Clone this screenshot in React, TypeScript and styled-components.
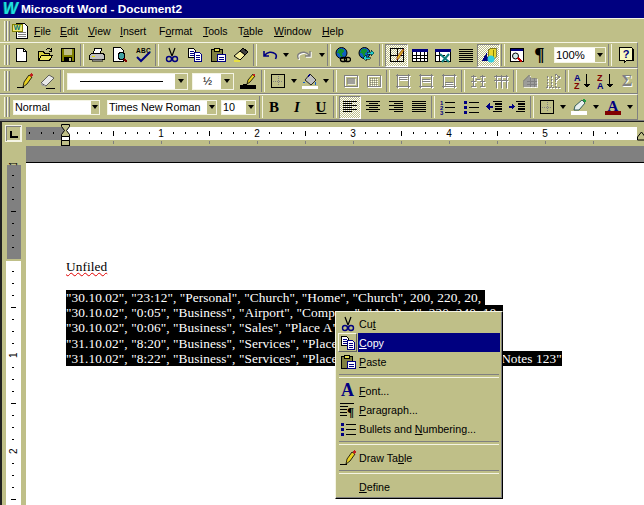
import React from "react";
import styled, { createGlobalStyle } from "styled-components";

const KHAKI = "#bfbf88";
const GRAY = "#808080";
const NAVY = "#000080";

const GlobalStyle = createGlobalStyle`
  html, body { margin: 0; padding: 0; background: ${KHAKI}; }
  * { box-sizing: border-box; }
`;

const Glyph = styled.svg.attrs({ viewBox: "0 0 16 16", shapeRendering: "crispEdges" })`
  width: 16px;
  height: 16px;
  display: block;
  flex: none;
`;

const Disabled: React.FC<{ children: React.ReactNode }> = ({ children }) => (
  <Glyph fill="none">
    <g transform="translate(1 1)" stroke="#fff" color="#fff">{children}</g>
    <g stroke={GRAY} color={GRAY}>{children}</g>
  </Glyph>
);

const NewIcon = () => (
  <Glyph><path d="M2.5 1.5h7l3 3v10h-10z" fill="#fff" stroke="#000" /><path d="M9.5 1.5v3h3" fill="none" stroke="#000" /></Glyph>
);
const OpenIcon = () => (
  <Glyph>
    <path d="M1.5 4.5h5l1 2h5v7h-11z" fill="#d8d040" stroke="#000" />
    <path d="M1.5 13.5l3-5h11l-3 5z" fill="#f0e860" stroke="#000" />
    <path d="M9 3c1-2 3-2 5 0M14.5 1v3h-3" fill="none" stroke="#000" />
  </Glyph>
);
const SaveIcon = () => (
  <Glyph>
    <rect x="1.5" y="1.5" width="13" height="13" fill="#808000" stroke="#000" />
    <rect x="4" y="2" width="8" height="6" fill={KHAKI} />
    <rect x="4" y="10" width="8" height="4" fill="#000" />
    <rect x="9" y="11" width="2" height="3" fill={KHAKI} />
  </Glyph>
);
const PrintIcon = () => (
  <Glyph>
    <path d="M5.5 1.5h7l-1 5h-7z" fill="#fff" stroke="#000" />
    <path d="M2.5 6.5h12l1 2v4h-15v-4z" fill="#c0c0c0" stroke="#000" />
    <rect x="3" y="9" width="3" height="1" fill="#e8e000" />
    <rect x="3" y="12" width="10" height="2" fill={GRAY} stroke="#000" strokeWidth=".5" />
  </Glyph>
);
const PreviewIcon = () => (
  <Glyph>
    <path d="M1.5 .5h7l3 3v11h-10z" fill="#fff" stroke="#000" />
    <circle cx="9.5" cy="9" r="3.5" fill="#40a0a0" stroke="#000" />
    <path d="M12 12l3 3" stroke="#800000" strokeWidth="2" />
  </Glyph>
);
const SpellIcon = () => (
  <Glyph>
    <text x="1" y="6" fontFamily="Liberation Sans, sans-serif" fontSize="6.5" fontWeight="700" fill="#000" style={{ letterSpacing: ".3px" }}>ABC</text>
    <path d="M2 10l4 4 9-9" fill="none" stroke={NAVY} strokeWidth="2" shapeRendering="auto" />
  </Glyph>
);
const CutIcon = () => (
  <Glyph>
    <path d="M5 1l3 8M11 1l-3 8" stroke="#000" fill="none" strokeWidth="1.2" shapeRendering="auto" />
    <circle cx="5" cy="12" r="2.5" fill="none" stroke={NAVY} strokeWidth="1.4" shapeRendering="auto" />
    <circle cx="11" cy="12" r="2.5" fill="none" stroke={NAVY} strokeWidth="1.4" shapeRendering="auto" />
  </Glyph>
);
const CopyIcon = () => (
  <Glyph>
    <path d="M1.5 1.5h5l2 2v7h-7z" fill="#fff" stroke="#000" />
    <path d="M3 4h4M3 6h4M3 8h4" stroke={NAVY} />
    <path d="M7.5 5.5h5l2 2v7h-7z" fill="#fff" stroke={NAVY} />
    <path d="M9 8h4M9 10h4M9 12h4" stroke={NAVY} />
  </Glyph>
);
const PasteIcon = () => (
  <Glyph>
    <rect x="1.5" y="2.5" width="11" height="12" fill="#808040" stroke="#000" />
    <rect x="4.5" y="1.5" width="5" height="3" fill="#e0d850" stroke="#000" />
    <path d="M7.5 7.5h8v7h-8z" fill="#fff" stroke={NAVY} />
    <path d="M9 10h5M9 12h5" stroke={NAVY} />
  </Glyph>
);
const PainterIcon = () => (
  <Glyph>
    <path d="M10 1l5 4-3 3-5-4z" fill="#404040" stroke="#000" />
    <path d="M7 4l5 4-5 5-6-4z" fill="#f8f0a0" stroke="#000" shapeRendering="auto" />
    <path d="M1 13h6v2H1z" fill="#e8e040" />
  </Glyph>
);
const UndoIcon = ({ color }: { color: string }) => (
  <Glyph>
    <path d="M2 4v5h5M2.5 8.5C5 5 10 4 13.5 7c1 1 1 3 0 5" fill="none" stroke={color} strokeWidth="1.6" shapeRendering="auto" />
  </Glyph>
);
const RedoIcon = () => (
  <Glyph>
    <g transform="translate(1 1)"><path d="M14 4v5H9M13.5 8.5C11 5 6 4 2.500 7c-1 1-1 3 0 5" fill="none" stroke="#fff" strokeWidth="1.4" shapeRendering="auto" /></g>
    <path d="M14 4v5H9M13.5 8.500C11 5 6 4 2.500 7c-1 1-1 3 0 5" fill="none" stroke={GRAY} strokeWidth="1.4" shapeRendering="auto" />
  </Glyph>
);
const Globe = () => (
  <>
    <circle cx="6.500" cy="6" r="5.500" fill="#1060c0" stroke="#000" shapeRendering="auto" />
    <path d="M4 2h4l1 2-2 2 1 3-2 1-1-3-3-1z" fill="#109030" />
  </>
);
const LinkIcon = () => (
  <Glyph>
    <Globe />
    <rect x="5.500" y="10.500" width="6" height="4" rx="2" fill="none" stroke="#000" strokeWidth="1.300" shapeRendering="auto" />
    <rect x="9.500" y="10.500" width="6" height="4" rx="2" fill="none" stroke="#000" strokeWidth="1.300" shapeRendering="auto" />
  </Glyph>
);
const WebIcon = () => (
  <Glyph>
    <Globe />
    <path d="M9 5h4V3l3 3-3 3V7H9z" fill="#20d0d0" stroke="#000" strokeWidth=".5" />
    <path d="M12 10H8V8l-3 3 3 3v-2h4z" fill="#20d0d0" stroke="#000" strokeWidth=".5" />
  </Glyph>
);
const TablesIcon = () => (
  <Glyph>
    <rect x="1.500" y="1.500" width="13" height="13" fill="none" stroke="#000" />
    <path d="M1.500 8.500h13M8.500 1.500v13" stroke="#000" />
    <path d="M14 2l1 1-5 8-2 2 0-3z" fill="#e8d020" stroke="#800000" strokeWidth=".6" shapeRendering="auto" />
  </Glyph>
);
const InsertTableIcon = () => (
  <Glyph>
    <rect x="0" y="2" width="16" height="13" fill="#fff" stroke="none" />
    <rect x="0" y="2" width="16" height="3" fill={NAVY} />
    <path d="M.5 5v9.500h15V5M.5 8.500h15M.5 11.500h15M4.500 5v10M8.500 5v10M12.500 5v10" fill="none" stroke="#000" />
  </Glyph>
);
const ExcelIcon = () => (
  <Glyph>
    <rect x="0" y="2" width="16" height="13" fill="#fff" />
    <rect x="0" y="2" width="16" height="3" fill={NAVY} />
    <path d="M.5 5v9.500h15V5M.5 8.500h9M4.500 5v9" fill="none" stroke="#000" />
    <path d="M5 7l9 8M14 7l-7 8" stroke="#108080" strokeWidth="2" shapeRendering="auto" />
  </Glyph>
);
const ColumnsIcon = () => (
  <Glyph>
    <path d="M1 2.500h14M1 4.500h14M1 6.500h14M1 8.500h14M1 10.500h14M1 12.500h14M1 14.500h14" stroke="#000" />
  </Glyph>
);
const DrawingIcon = () => (
  <Glyph>
    <path d="M6 5L1 14h6z" fill={NAVY} />
    <path d="M7 3l3-2h5v9l-3 2H7z" fill="#e8d830" stroke="#404000" strokeWidth=".6" />
    <path d="M12 3v9" stroke="#808000" />
    <circle cx="10" cy="12" r="3.500" fill="#30d0e0" shapeRendering="auto" />
  </Glyph>
);
const DocMapIcon = () => (
  <Glyph>
    <rect x="1.500" y="1.500" width="13" height="13" fill="#fff" stroke="#000" />
    <rect x="2" y="2" width="12" height="2" fill={NAVY} />
    <circle cx="6.500" cy="9" r="3" fill="#d0e8e8" stroke="#000" shapeRendering="auto" />
    <path d="M9 11l4 4" stroke="#c00000" strokeWidth="2" />
  </Glyph>
);
const HelpIcon = () => (
  <Glyph viewBox="0 0 16 16">
    <path d="M1.500 .5h12l1 1v12h-6l-2 2v-2h-5z" fill="#f8f8c0" stroke="#000" />
    <path d="M15.500 2v12" stroke="#000" />
    <text x="8" y="11" textAnchor="middle" fontFamily="Liberation Sans, sans-serif" fontSize="11" fontWeight="700" fill={NAVY}>?</text>
  </Glyph>
);
const PencilIcon = () => (
  <Glyph>
    <path d="M0 14.500h7" stroke="#000" />
    <path d="M6 14l1-5 5-7 3 2-5 7z" fill="#e8d020" stroke="#000" strokeWidth=".8" shapeRendering="auto" />
    <path d="M12 2l3 2 1-2-2-2z" fill="#c02020" />
  </Glyph>
);
const EraserIcon = () => (
  <Glyph>
    <path d="M1 10l8-8 5 3-8 8z" fill="#e8e8e8" stroke="#404040" strokeWidth=".8" shapeRendering="auto" />
    <path d="M1 10l5 3v1L1 12z" fill="#a0a0a0" />
    <path d="M6 15.500h9" stroke="#000" />
  </Glyph>
);
const PenColorIcon = () => (
  <Glyph>
    <path d="M3 11.500h4" stroke="#000" />
    <path d="M7 11l1-4 5-6 2 2-5 6z" fill="#e8d020" stroke="#000" strokeWidth=".8" shapeRendering="auto" />
    <path d="M12 2l2 2 1-2-1-2z" fill="#c02020" />
    <rect x="0" y="12" width="16" height="4" fill="#000" />
  </Glyph>
);
const BorderIcon = () => (
  <Glyph>
    <rect x="1.500" y="1.500" width="13" height="13" fill="none" stroke="#000" />
    <path d="M8 3v10M3 8h10" stroke={GRAY} strokeDasharray="1 1" />
  </Glyph>
);
const ShadeIcon = () => (
  <Glyph>
    <path d="M8 1l6 6-5 5-6-5z" fill="#c0c0c0" stroke="#000" strokeWidth=".8" shapeRendering="auto" />
    <path d="M8 1L6 4" stroke={NAVY} />
    <path d="M2 7c-1 2-1 3 0 4 1-1 1-2 0-4z" fill="#1060d0" />
    <path d="M13 8c1 2 2 3 1 4-1 0-2-2-1-4z" fill="#1060d0" />
    <rect x="0" y="13" width="16" height="3" fill="#fff" />
  </Glyph>
);
const MergeIcon = () => (
  <Disabled>
    <rect x="1.500" y="2.500" width="13" height="11" />
    <rect x="4" y="5" width="8" height="6" fill="currentColor" stroke="none" opacity=".7" />
  </Disabled>
);
const SplitIcon = () => (
  <Disabled>
    <rect x="1.500" y="2.500" width="13" height="11" />
    <path d="M4 5.500h8M4 7.500h8M4 9.500h8M4 11.500h8" strokeDasharray="1 1" />
  </Disabled>
);
const VAlignIcon = ({ y }: { y: number }) => (
  <Disabled>
    <path d="M1 2.500h14M1 13.500h14M2.500 1v14M13.500 1v14" />
    <path d={`M4 ${y}.5h8M4 ${y + 2}.5h8`} />
  </Disabled>
);
const RowsIcon = () => (
  <Disabled>
    <path d="M3.500 2v12M12.500 2v12M1 3.500h5M1 8.500h5M1 13.500h5M10 3.500h5M10 8.500h5M10 13.500h5M6 6.500h4" />
  </Disabled>
);
const ColsIcon = () => (
  <Disabled>
    <path d="M1 3.500h14M1 7.500h14M3.500 2v13M8.500 2v13M13.500 2v13" />
  </Disabled>
);
const AutoFormatIcon = () => (
  <Disabled>
    <path d="M7 1L1 7v7h14V5H9z" fill="currentColor" stroke="none" opacity=".75" />
    <path d="M5 8h10M5 11h10M8 5v9M12 5v9" />
  </Disabled>
);
const OrientIcon = () => (
  <Disabled>
    <path d="M2.500 3v11M6.500 3v11M10.500 1v13M1 14.500h14" strokeDasharray="2 1" />
    <path d="M10 1l5 3-5 3" />
  </Disabled>
);
const SortIcon = ({ top, bottom, topColor, bottomColor }: { top: string; bottom: string; topColor: string; bottomColor: string }) => (
  <Glyph>
    <text x="0" y="7.500" fontFamily="Liberation Sans, sans-serif" fontSize="9" fontWeight="700" fill={topColor}>{top}</text>
    <text x="0" y="15.500" fontFamily="Liberation Sans, sans-serif" fontSize="9" fontWeight="700" fill={bottomColor}>{bottom}</text>
    <path d="M12.500 1v12" stroke="#000" />
    <path d="M9.500 11h7l-3.500 4z" fill="#000" />
  </Glyph>
);
const SumIcon = () => (
  <Glyph>
    <text x="9" y="14" textAnchor="middle" fontFamily="Liberation Serif, serif" fontSize="16" fontWeight="700" fill="#fff">Σ</text>
    <text x="8" y="13" textAnchor="middle" fontFamily="Liberation Serif, serif" fontSize="16" fontWeight="700" fill={GRAY}>Σ</text>
  </Glyph>
);
const AlignIcon = ({ kind }: { kind: "left" | "center" | "right" | "justify" }) => {
  const lengths = kind === "justify" ? [14, 14, 14, 14, 14, 14] : [14, 9, 14, 9, 14, 9];
  return (
    <Glyph>
      {lengths.map((len, i) => {
        const x = kind === "center" ? 1 + (14 - len) / 2 : kind === "right" ? 15 - len : 1;
        return <rect key={i} x={x} y={2 + i * 2} width={len} height="1" fill="#000" />;
      })}
    </Glyph>
  );
};
const NumberingIcon = () => (
  <Glyph>
    <text x="0" y="5.500" fontFamily="Liberation Sans, sans-serif" fontSize="6" fontWeight="700" fill={NAVY}>1</text>
    <text x="0" y="10.500" fontFamily="Liberation Sans, sans-serif" fontSize="6" fontWeight="700" fill={NAVY}>2</text>
    <text x="0" y="15.500" fontFamily="Liberation Sans, sans-serif" fontSize="6" fontWeight="700" fill={NAVY}>3</text>
    <path d="M5 3.500h10M5 8.500h10M5 13.500h10" stroke="#000" />
  </Glyph>
);
const BulletsIcon = () => (
  <Glyph>
    <rect x="1" y="2" width="3" height="3" fill={NAVY} />
    <rect x="1" y="7" width="3" height="3" fill={NAVY} />
    <rect x="1" y="12" width="3" height="3" fill={NAVY} />
    <path d="M6 3.500h10M6 8.500h10M6 13.500h10" stroke="#000" />
  </Glyph>
);
const IndentIcon = ({ inward }: { inward: boolean }) => (
  <Glyph>
    <path d="M7 2.500h9M9 5h7M9 7.500h7M9 10h7M7 12.500h9" stroke="#000" strokeWidth="1.200" />
    {inward ? <path d="M0 6.500h3V4l3 3.500L3 11V8.500H0z" fill={NAVY} /> : <path d="M7 6.500H4V4L0 7.500 4 11V8.500h3z" fill={NAVY} />}
  </Glyph>
);
const HighlightIcon = () => (
  <Glyph>
    <path d="M3 11l1-4 7-6 3 3-6 7z" fill="#e8f0f0" stroke="#104040" strokeWidth=".8" shapeRendering="auto" />
    <path d="M11 1l3 3 1-2-2-2z" fill="#20a040" />
    <rect x="0" y="12" width="16" height="4" fill="#fff" />
  </Glyph>
);
const FontColorIcon = () => (
  <Glyph>
    <text x="8" y="12" textAnchor="middle" fontFamily="Liberation Serif, serif" fontSize="15" fontWeight="700" fill={NAVY}>A</text>
    <rect x="0" y="12" width="16" height="4" fill="#800000" />
  </Glyph>
);
const ParagraphIcon = () => (
  <Glyph>
    <path d="M0 1.500h14M0 4.500h8M0 7.500h7M0 10.500h7M0 13.500h7" stroke="#000" />
    <text x="7" y="14" fontFamily="Liberation Serif, serif" fontSize="13" fontWeight="700" fill="#000">¶</text>
  </Glyph>
);
const DocIcon = () => (
  <Glyph>
    <path d="M4.500 .5h8l3 3v12h-11z" fill="#fff" stroke="#000" />
    <path d="M6 9h8M6 11h8M6 13h8" stroke={GRAY} />
    <rect x="0" y="1" width="10" height="7" fill="#f0e870" stroke="#808000" />
    <text x="5" y="7" textAnchor="middle" fontFamily="Liberation Sans, sans-serif" fontSize="7" fontWeight="700" fill="#007070">W</text>
  </Glyph>
);

const Screen = styled.div`
  position: relative;
  width: 644px;
  height: 505px;
  overflow: hidden;
  background: ${KHAKI};
  display: flex;
  flex-direction: column;
  font-family: "Liberation Sans", Arial, sans-serif;
  color: #000;
`;

const TitleBar = styled.div`
  height: 18px;
  background: ${NAVY};
  display: flex;
  align-items: center;
  padding-left: 3px;
  gap: 3px;
  color: #fff;
  font-weight: 700;
  font-size: 11.8px;
  flex: none;
`;

const TitleLogo = styled.span`
  width: 15px;
  font-family: "Liberation Sans", sans-serif;
  font-style: italic;
  font-weight: 700;
  font-size: 16px;
  line-height: 18px;
  color: #20e0e0;
  text-shadow: -1px 0 #007060;
`;

const MenuBar = styled.div`
  height: 24px;
  flex: none;
  display: flex;
  align-items: center;
  padding-left: 4px;
  border-top: 1px solid #f4f4e4;
  font-size: 10.5px;
`;

const Handle = styled.div<{ $gap?: number }>`
  width: 6px;
  height: 20px;
  flex: none;
  margin-right: ${(p) => p.$gap ?? 0}px;
  background: linear-gradient(
    90deg,
    #f4f4e4 0 1px,
    ${KHAKI} 1px 2px,
    ${GRAY} 2px 3px,
    #f4f4e4 3px 4px,
    ${KHAKI} 4px 5px,
    ${GRAY} 5px 6px
  );
`;

const MenuLogo = styled.div`
  margin: 0 3px 0 2px;
  width: 15px;
  display: flex;
`;

const MenuTitle = styled.div<{ $w: number }>`
  width: ${(p) => p.$w}px;
  padding-left: 4px;
  flex: none;
`;

const Toolbar = styled.div`
  height: 26px;
  width: 638px;
  flex: none;
  display: flex;
  align-items: center;
  padding-left: 4px;
  overflow: hidden;
  border-top: 1px solid #f4f4e4;
  border-bottom: 1px solid ${GRAY};
  border-right: 1px solid ${GRAY};
  font-size: 11px;
`;

const Btn = styled.div<{ $w?: number; $on?: boolean; $ml?: number }>`
  width: ${(p) => p.$w ?? 23}px;
  height: 23px;
  margin-left: ${(p) => p.$ml ?? 0}px;
  flex: none;
  display: flex;
  align-items: center;
  justify-content: center;
  ${(p) =>
    p.$on
      ? `
    background-image: repeating-conic-gradient(#fff 0 25%, ${KHAKI} 0 50%);
    background-size: 2px 2px;
    border-top: 1px solid ${GRAY};
    border-left: 1px solid ${GRAY};
    border-right: 1px solid #fff;
    border-bottom: 1px solid #fff;
  `
      : ""}
`;

const Face = styled.span<{ $style: "bold" | "italic" | "under" | "para" }>`
  font-family: "Liberation Serif", serif;
  font-size: ${(p) => (p.$style === "para" ? 19 : 15)}px;
  font-weight: 700;
  font-style: ${(p) => (p.$style === "italic" ? "italic" : "normal")};
  text-decoration: ${(p) => (p.$style === "under" ? "underline" : "none")};
`;

const Drop = styled.div<{ $w?: number }>`
  width: ${(p) => p.$w ?? 10}px;
  height: 23px;
  flex: none;
  display: flex;
  align-items: center;
  justify-content: center;
`;

const Arrow = styled.div`
  width: 0;
  height: 0;
  border-left: 3.5px solid transparent;
  border-right: 3.5px solid transparent;
  border-top: 4px solid #000;
`;

const Sep = styled.div<{ $w?: number }>`
  width: ${(p) => p.$w ?? 6}px;
  height: 22px;
  flex: none;
  display: flex;
  justify-content: center;
  &::before {
    content: "";
    width: 2px;
    height: 100%;
    border-left: 1px solid ${GRAY};
    border-right: 1px solid #f4f4e4;
  }
`;

const Select = styled.div<{ $w: number; $h?: number; $ml?: number }>`
  width: ${(p) => p.$w}px;
  height: ${(p) => p.$h ?? 15}px;
  margin-left: ${(p) => p.$ml ?? 0}px;
  flex: none;
  display: flex;
  align-items: center;
  background: #fff;
  border: 1px solid #f4f4e4;
  white-space: nowrap;
`;

const SelectText = styled.div<{ $center?: boolean; $size?: number }>`
  flex: 1;
  padding-left: 1px;
  font-size: ${(p) => p.$size ?? 10.8}px;
  text-align: ${(p) => (p.$center ? "center" : "left")};
  overflow: hidden;
`;

const SelectBtn = styled.div<{ $w?: number }>`
  width: ${(p) => p.$w ?? 10}px;
  height: 100%;
  flex: none;
  background: ${KHAKI};
  display: flex;
  align-items: center;
  justify-content: center;
`;

const LineSample = styled.div`
  flex: 1;
  height: 1px;
  margin: 0 12px;
  background: #000;
`;

const Workspace = styled.div`
  flex: 1;
  display: flex;
  min-height: 0;
  padding-top: 2px;
  box-shadow: inset 2px 0 0 #202020;
  position: relative;
  &::before {
    content: "";
    position: absolute;
    left: 0;
    right: 0;
    top: 0;
    height: 2px;
    background: linear-gradient(${GRAY} 0 1px, #202020 1px 2px);
  }
`;

const LeftColumn = styled.div`
  width: 26px;
  flex: none;
  padding: 3px 0 0 5px;
  display: flex;
  flex-direction: column;
`;

const TabButton = styled.div`
  width: 17px;
  height: 17px;
  flex: none;
  border: 1px solid #f4f4e4;
  box-shadow: inset 1px 1px 0 ${GRAY}, inset -1px -1px 0 #f4f4e4;
  display: flex;
  align-items: center;
  justify-content: center;
  &::before {
    content: "";
    width: 6px;
    height: 5px;
    margin: 1px 0 0 1px;
    border-left: 2px solid #000;
    border-bottom: 2px solid #000;
  }
`;

const SideRuler = styled.svg`
  width: 15px;
  height: 342px;
  margin: 21px 0 0 1px;
  display: block;
  flex: none;
`;

const RightColumn = styled.div`
  flex: 1;
  display: flex;
  flex-direction: column;
  min-width: 0;
`;

const TopRuler = styled.svg`
  width: 618px;
  height: 24px;
  display: block;
  flex: none;
`;

const MarginBand = styled.div`
  height: 17px;
  flex: none;
  background: ${GRAY};
  border-bottom: 1px solid #000;
`;

const Page = styled.div`
  flex: 1;
  background: #fff;
  padding: 96px 0 0 40px;
  font-family: "Liberation Serif", "Times New Roman", serif;
  font-size: 13.33px;
  line-height: 15.33px;
  letter-spacing: 0.08px;
  white-space: pre;
`;

const Misspelt = styled.div`
  height: 30.66px;
  & > span {
    text-decoration: underline wavy #e00000 1px;
    text-underline-offset: 1px;
  }
`;

const Selected = styled.div`
  width: fit-content;
  background: #000;
  color: #fff;
`;

const ContextMenu = styled.div`
  position: absolute;
  left: 335px;
  top: 311px;
  width: 168px;
  padding: 2px;
  background: ${KHAKI};
  border: 1px solid;
  border-color: #f4f4e4 #000 #000 #f4f4e4;
  box-shadow: inset -1px -1px 0 ${GRAY};
  font-size: 10.7px;
  color: #000;
`;

const MenuRow = styled.div`
  height: 19px;
  display: flex;
  align-items: stretch;
`;

const MenuIconCell = styled.div<{ $raised?: boolean }>`
  width: 19px;
  flex: none;
  display: flex;
  align-items: center;
  justify-content: center;
  ${(p) => (p.$raised ? "border: 1px solid; border-color: #f4f4e4 #606060 #606060 #f4f4e4;" : "")}
`;

const MenuLabel = styled.div<{ $active?: boolean }>`
  flex: 1;
  margin-left: 1px;
  padding-left: 1px;
  display: flex;
  align-items: center;
  white-space: pre;
  background: ${(p) => (p.$active ? NAVY : "transparent")};
  color: ${(p) => (p.$active ? "#fff" : "#000")};
`;

const MenuDivider = styled.div`
  height: 10px;
  display: flex;
  align-items: center;
  padding: 0 1px;
  &::before {
    content: "";
    flex: 1;
    height: 2px;
    border-top: 1px solid ${GRAY};
    border-bottom: 1px solid #f4f4e4;
  }
`;

const FontA = styled.span`
  font-family: "Liberation Serif", serif;
  font-weight: 700;
  font-size: 18px;
  line-height: 17px;
  color: ${NAVY};
`;

const menuTitles: [React.ReactNode, number][] = [
  [<><u>F</u>ile</>, 26],
  [<><u>E</u>dit</>, 28],
  [<><u>V</u>iew</>, 32],
  [<><u>I</u>nsert</>, 39],
  [<>F<u>o</u>rmat</>, 44],
  [<><u>T</u>ools</>, 35],
  [<>T<u>a</u>ble</>, 36],
  [<><u>W</u>indow</>, 48],
  [<><u>H</u>elp</>, 40],
];

const docLines = [
  `"30.10.02", "23:12", "Personal", "Church", "Home", "Church", 200, 220, 20, `,
  `"30.10.02", "0:05", "Business", "Airport", "Company", "Air Port", 220, 240, 10, `,
  `"30.10.02", "0:06", "Business", "Sales", "Place A", "Customer", 10, `,
  `"31.10.02", "8:20", "Business", "Services", "Place B", "Site", 10, `,
  `"31.10.02", "8:22", "Business", "Services", "Place C", "Site Two", 140, 150, 6, "Notes 123"`,
];

const tick = (k: number) => 39 + k * 12;

const App: React.FC = () => {
  const topTicks = Array.from({ length: 50 }, (_, i) => i - 3).filter((k) => tick(k) < 611);
  const sideTicks = Array.from({ length: 29 }, (_, i) => i - 8);
  return (
    <Screen>
      <GlobalStyle />
      <TitleBar>
        <TitleLogo>W</TitleLogo>
        Microsoft Word - Document2
      </TitleBar>
      <MenuBar>
        <Handle />
        <MenuLogo><DocIcon /></MenuLogo>
        {menuTitles.map(([label, w], i) => (
          <MenuTitle key={i} $w={w}>{label}</MenuTitle>
        ))}
      </MenuBar>

      <Toolbar>
        <Handle />
        <Btn><NewIcon /></Btn>
        <Btn><OpenIcon /></Btn>
        <Btn><SaveIcon /></Btn>
        <Sep />
        <Btn><PrintIcon /></Btn>
        <Btn><PreviewIcon /></Btn>
        <Btn><SpellIcon /></Btn>
        <Sep />
        <Btn><CutIcon /></Btn>
        <Btn><CopyIcon /></Btn>
        <Btn><PasteIcon /></Btn>
        <Btn><PainterIcon /></Btn>
        <Sep />
        <Btn><UndoIcon color={NAVY} /></Btn>
        <Drop><Arrow /></Drop>
        <Btn $w={26}><RedoIcon /></Btn>
        <Drop><Arrow /></Drop>
        <Sep $w={4} />
        <Btn><LinkIcon /></Btn>
        <Btn><WebIcon /></Btn>
        <Sep $w={8} />
        <Btn $on><TablesIcon /></Btn>
        <Btn><InsertTableIcon /></Btn>
        <Btn><ExcelIcon /></Btn>
        <Btn><ColumnsIcon /></Btn>
        <Btn $on><DrawingIcon /></Btn>
        <Sep $w={5} />
        <Btn><DocMapIcon /></Btn>
        <Btn><Face $style="para">¶</Face></Btn>
        <Select $w={52} $h={16} $ml={3}>
          <SelectText $size={11.3}>100%</SelectText>
          <SelectBtn><Arrow /></SelectBtn>
        </Select>
        <Sep $w={8} />
        <Btn><HelpIcon /></Btn>
      </Toolbar>

      <Toolbar>
        <Handle $gap={3} />
        <Btn><PencilIcon /></Btn>
        <Btn><EraserIcon /></Btn>
        <Sep />
        <Select $w={121} $h={17} $ml={2}>
          <LineSample />
          <SelectBtn $w={12}><Arrow /></SelectBtn>
        </Select>
        <Select $w={42} $h={17} $ml={4}>
          <SelectText $center>½</SelectText>
          <SelectBtn $w={12}><Arrow /></SelectBtn>
        </Select>
        <Btn $ml={2}><PenColorIcon /></Btn>
        <Sep $w={7} />
        <Btn><BorderIcon /></Btn>
        <Drop $w={9}><Arrow /></Drop>
        <Btn><ShadeIcon /></Btn>
        <Drop><Arrow /></Drop>
        <Sep $w={8} />
        <Btn><MergeIcon /></Btn>
        <Btn><SplitIcon /></Btn>
        <Sep />
        <Btn><VAlignIcon y={4} /></Btn>
        <Btn><VAlignIcon y={6} /></Btn>
        <Btn><VAlignIcon y={9} /></Btn>
        <Sep />
        <Btn><RowsIcon /></Btn>
        <Btn><ColsIcon /></Btn>
        <Sep />
        <Btn><AutoFormatIcon /></Btn>
        <Btn><OrientIcon /></Btn>
        <Sep />
        <Btn><SortIcon top="A" bottom="Z" topColor={NAVY} bottomColor="#800000" /></Btn>
        <Btn><SortIcon top="Z" bottom="A" topColor="#800000" bottomColor={NAVY} /></Btn>
        <Btn $w={22}><SumIcon /></Btn>
      </Toolbar>

      <Toolbar>
        <Handle $gap={3} />
        <Select $w={87}>
          <SelectText>Normal</SelectText>
          <SelectBtn $w={8}><Arrow /></SelectBtn>
        </Select>
        <Select $w={110} $ml={7}>
          <SelectText>Times New Roman</SelectText>
          <SelectBtn $w={9}><Arrow /></SelectBtn>
        </Select>
        <Select $w={35} $ml={4}>
          <SelectText>10</SelectText>
          <SelectBtn $w={9}><Arrow /></SelectBtn>
        </Select>
        <Sep $w={9} />
        <Btn $w={18}><Face $style="bold">B</Face></Btn>
        <Btn $w={28}><Face $style="italic">I</Face></Btn>
        <Btn $w={20}><Face $style="under">U</Face></Btn>
        <Sep $w={8} />
        <Btn $w={22} $on><AlignIcon kind="left" /></Btn>
        <Btn><AlignIcon kind="center" /></Btn>
        <Btn><AlignIcon kind="right" /></Btn>
        <Btn><AlignIcon kind="justify" /></Btn>
        <Sep />
        <Btn><NumberingIcon /></Btn>
        <Btn><BulletsIcon /></Btn>
        <Btn><IndentIcon inward={false} /></Btn>
        <Btn><IndentIcon inward /></Btn>
        <Sep $w={7} />
        <Btn><BorderIcon /></Btn>
        <Drop $w={9}><Arrow /></Drop>
        <Btn><HighlightIcon /></Btn>
        <Drop $w={11}><Arrow /></Drop>
        <Btn $w={24}><FontColorIcon /></Btn>
        <Drop><Arrow /></Drop>
      </Toolbar>

      <Workspace>
        <LeftColumn>
          <TabButton />
          <SideRuler viewBox="0 0 15 342">
            <rect x="1" y="2" width="14" height="94" fill={GRAY} />
            <rect x="0" y="98" width="15" height="244" fill="#fff" />
            {sideTicks.map((k) => {
              const y = 96 + k * 12;
              if (k % 8 === 0) return null;
              const long = Math.abs(k % 4) === 0;
              return <rect key={k} x={long ? 5 : 6} y={y} width={long ? 5 : 2} height="1" fill="#000" />;
            })}
            {[0, 192, 288].map((y, i) => (
              <text key={y} transform={`translate(11 ${y + 3}) rotate(-90)`} fontFamily="Liberation Sans, sans-serif" fontSize="10" fill="#000">
                {i === 2 ? 2 : 1}
              </text>
            ))}
          </SideRuler>
        </LeftColumn>
        <RightColumn>
          <TopRuler viewBox="0 0 618 24">
            <rect x="0" y="5" width="39" height="13" fill={GRAY} />
            <rect x="39" y="5" width="572" height="13" fill="#fff" />
            {topTicks.map((k) => {
              if (k === 0 || k % 8 === 0) return null;
              const long = Math.abs(k % 4) === 0;
              return <rect key={k} x={tick(k)} y={long ? 9 : 10} width="1" height={long ? 5 : 2} fill="#000" />;
            })}
            {[1, 2, 3, 4, 5].map((n) => (
              <text key={n} x={tick(n * 8)} y="15" textAnchor="middle" fontFamily="Liberation Sans, sans-serif" fontSize="10" fill="#000">{n}</text>
            ))}
            {[87, 135, 183, 231, 279, 327, 375, 423, 471, 519, 567].map((x) => (
              <rect key={x} x={x} y="19" width="1" height="3" fill={GRAY} />
            ))}
            <path d="M35.500 2.500h8v2l-3 4 3 4v2h-8v-2l3-4-3-4z" fill={KHAKI} stroke="#000" />
            <rect x="35.500" y="18.500" width="8" height="5" fill={KHAKI} stroke="#000" />
            <path d="M35.500 14.500h8v4h-8z" fill="#fff" stroke="#000" />
            <path d="M611.500 18v-3l4-5 3 4v4z" fill={KHAKI} stroke="#000" />
          </TopRuler>
          <MarginBand />
          <Page>
            <Misspelt><span>Unfiled</span></Misspelt>
            {docLines.map((line) => (
              <Selected key={line}>{line}</Selected>
            ))}
          </Page>
        </RightColumn>
      </Workspace>

      <ContextMenu>
        <MenuRow>
          <MenuIconCell><CutIcon /></MenuIconCell>
          <MenuLabel>Cu<u>t</u></MenuLabel>
        </MenuRow>
        <MenuRow>
          <MenuIconCell $raised><CopyIcon /></MenuIconCell>
          <MenuLabel $active><u>C</u>opy</MenuLabel>
        </MenuRow>
        <MenuRow>
          <MenuIconCell><PasteIcon /></MenuIconCell>
          <MenuLabel><u>P</u>aste</MenuLabel>
        </MenuRow>
        <MenuDivider />
        <MenuRow>
          <MenuIconCell><FontA>A</FontA></MenuIconCell>
          <MenuLabel><u>F</u>ont...</MenuLabel>
        </MenuRow>
        <MenuRow>
          <MenuIconCell><ParagraphIcon /></MenuIconCell>
          <MenuLabel><u>P</u>aragraph...</MenuLabel>
        </MenuRow>
        <MenuRow>
          <MenuIconCell><BulletsIcon /></MenuIconCell>
          <MenuLabel>Bullets and <u>N</u>umbering...</MenuLabel>
        </MenuRow>
        <MenuDivider />
        <MenuRow>
          <MenuIconCell><PencilIcon /></MenuIconCell>
          <MenuLabel>Draw Ta<u>b</u>le</MenuLabel>
        </MenuRow>
        <MenuDivider />
        <MenuRow>
          <MenuIconCell />
          <MenuLabel><u>D</u>efine</MenuLabel>
        </MenuRow>
      </ContextMenu>
    </Screen>
  );
};

export default App;
